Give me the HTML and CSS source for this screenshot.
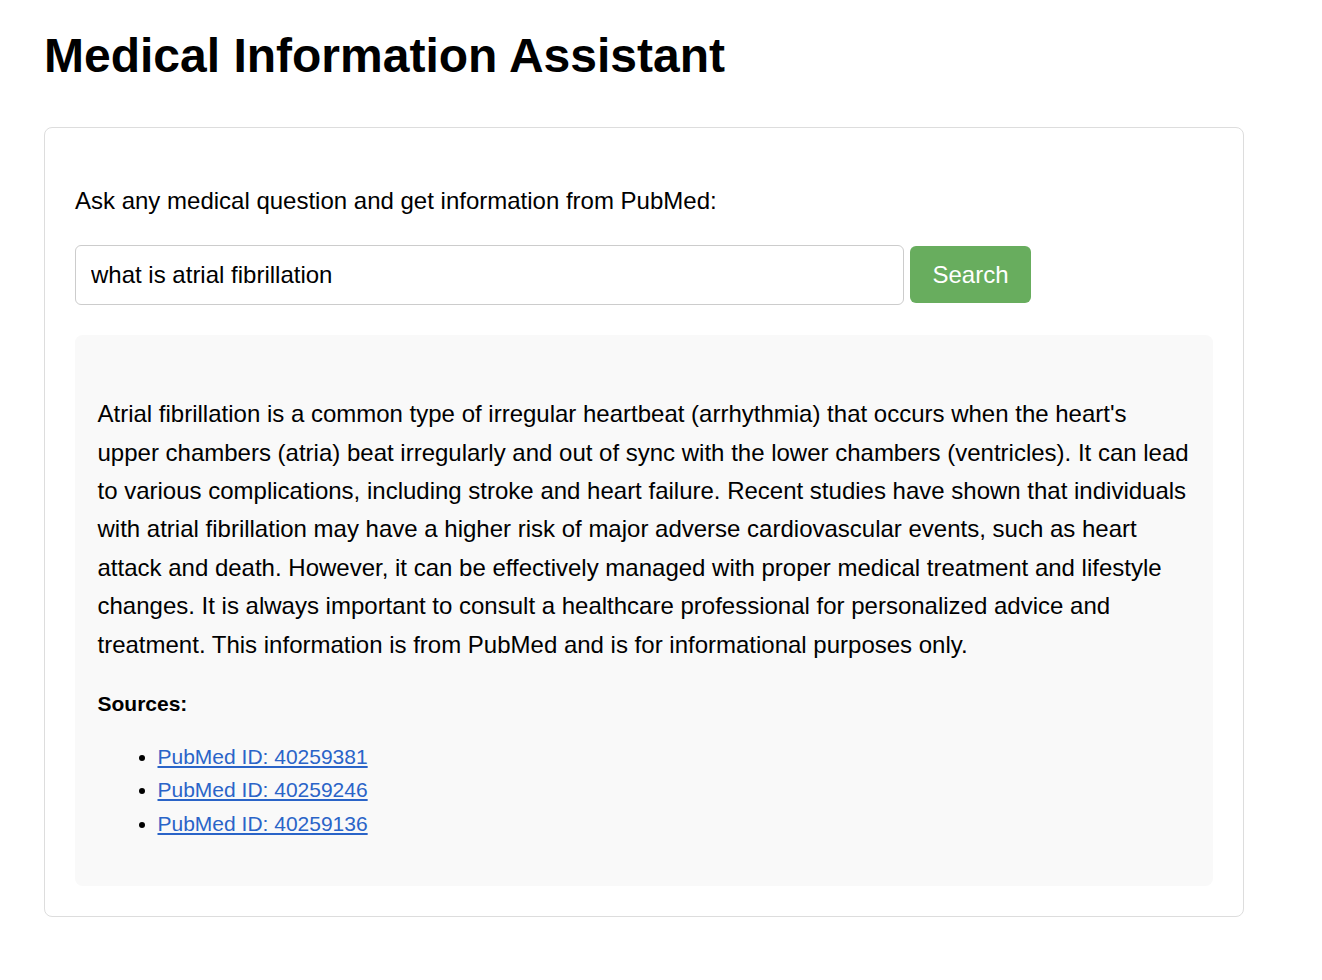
FILE: index.html
```html
<!DOCTYPE html>
<html lang="en">
<head>
<meta charset="utf-8">
<title>Medical Information Assistant</title>
<link rel="stylesheet" href="styles.css">
</head>
<body>
<div class="page">
  <h1 class="title">Medical Information Assistant</h1>
  <div class="card">
    <p class="prompt">Ask any medical question and get information from PubMed:</p>
    <div class="search-row">
      <input class="query" type="text" value="what is atrial fibrillation">
      <button class="search-btn" type="button">Search</button>
    </div>
    <div class="result">
      <p class="answer">Atrial fibrillation is a common type of irregular heartbeat (arrhythmia) that occurs when the heart's upper chambers (atria) beat irregularly and out of sync with the lower chambers (ventricles). It can lead to various complications, including stroke and heart failure. Recent studies have shown that individuals with atrial fibrillation may have a higher risk of major adverse cardiovascular events, such as heart attack and death. However, it can be effectively managed with proper medical treatment and lifestyle changes. It is always important to consult a healthcare professional for personalized advice and treatment. This information is from PubMed and is for informational purposes only.</p>
      <p class="sources-title">Sources:</p>
      <ul class="sources">
        <li><a href="#">PubMed ID: 40259381</a></li>
        <li><a href="#">PubMed ID: 40259246</a></li>
        <li><a href="#">PubMed ID: 40259136</a></li>
      </ul>
    </div>
  </div>
</div>
</body>
</html>
```

FILE: styles.css
```css
* { box-sizing: border-box; }

html, body {
  margin: 0;
  padding: 0;
  background: #ffffff;
}

body {
  font-family: "Liberation Sans", Arial, Helvetica, sans-serif;
  color: #000000;
}

.page {
  width: 1288px;
  padding: 27.5px 44px 40px 44px;
}

.title {
  margin: 0 0 44.3px 0;
  font-size: 48px;
  font-weight: bold;
  line-height: 55.2px;
}

.card {
  width: 1200px;
  border: 1px solid #dddddd;
  border-radius: 8px;
  padding: 59px 30px 30px 30px;
}

.prompt {
  margin: 0 0 30px 0;
  font-size: 24px;
  line-height: 27.6px;
}

.search-row {
  display: flex;
  align-items: center;
  gap: 6px;
  margin-bottom: 30px;
}

.query {
  width: 829px;
  height: 60px;
  padding: 0 15px;
  border: 1px solid #cccccc;
  border-radius: 6px;
  font-family: "Liberation Sans", Arial, Helvetica, sans-serif;
  font-size: 24px;
  color: #000000;
  background: #ffffff;
  outline: none;
}

.search-btn {
  height: 57.6px;
  padding: 0 22.5px;
  border: none;
  border-radius: 6px;
  background: #68ad5e;
  color: #ffffff;
  font-family: "Liberation Sans", Arial, Helvetica, sans-serif;
  font-size: 24px;
  cursor: pointer;
}

.result {
  background: #f9f9f9;
  border-radius: 7.5px;
  padding: 60.5px 22.5px 22.5px 22.5px;
}

.answer {
  margin: 0;
  font-size: 24px;
  line-height: 38.4px;
}

.sources-title {
  margin: 22.7px 0 0 0;
  font-size: 21px;
  font-weight: bold;
  line-height: 33.6px;
}

.sources {
  margin: 19.6px 0 23px 0;
  padding-left: 60px;
  font-size: 21px;
  line-height: 33.6px;
}

.sources a {
  color: #2a64c8;
  text-decoration: underline;
}
```
